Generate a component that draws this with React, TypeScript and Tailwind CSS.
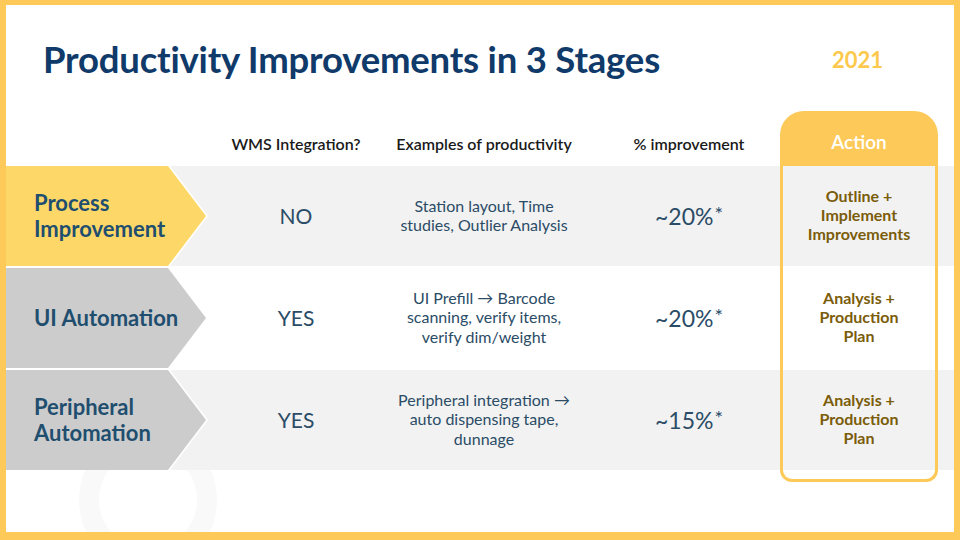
import React from "react";

type Row = {
  label: string[];
  active: boolean;
  wms: string;
  examples: string[];
  pct: string;
  action: string[];
  shade: boolean;
};

const rows: Row[] = [
  {
    label: ["Process", "Improvement"],
    active: true,
    wms: "NO",
    examples: ["Station layout, Time", "studies, Outlier Analysis"],
    pct: "~20%",
    action: ["Outline +", "Implement", "Improvements"],
    shade: true,
  },
  {
    label: ["UI Automation"],
    active: false,
    wms: "YES",
    examples: ["UI Prefill \u2192 Barcode", "scanning, verify items,", "verify dim/weight"],
    pct: "~20%",
    action: ["Analysis +", "Production", "Plan"],
    shade: false,
  },
  {
    label: ["Peripheral", "Automation"],
    active: false,
    wms: "YES",
    examples: ["Peripheral integration \u2192", "auto dispensing tape,", "dunnage"],
    pct: "~15%",
    action: ["Analysis +", "Production", "Plan"],
    shade: true,
  },
];

const Arrow = ({ row }: { row: Row }) => (
  <div className="w-[202px] h-[100px] shrink-0 bg-white [clip-path:polygon(0_0,164px_0,202px_50%,164px_100%,0_100%)]">
    <div
      className={`w-full h-full flex flex-col justify-center pl-[28px] [clip-path:polygon(0_0,162px_0,200px_50%,162px_100%,0_100%)] ${
        row.active ? "bg-[#fdd868]" : "bg-[#cccccc]"
      }`}
    >
      {row.label.map((l) => (
        <div key={l} className="text-[22px] leading-[26px] font-bold text-[#1f4e6f]">
          {l}
        </div>
      ))}
    </div>
  </div>
);

const StageRow = ({ row }: { row: Row }) => (
  <div className={`flex h-[100px] ${row.shade ? "bg-[#f2f2f2]" : "bg-white"}`}>
    <Arrow row={row} />
    <div className="w-[180px] shrink-0 -ml-[2px] flex items-center justify-center text-[21px] text-[#2b4c66]">
      {row.wms}
    </div>
    <div className="w-[196px] shrink-0 -mt-[2px] flex flex-col items-center justify-center text-[16px] leading-[19.5px] text-[#2b4c66]">
      {row.examples.map((e) => (
        <div key={e}>{e}</div>
      ))}
    </div>
    <div className="w-[198px] shrink-0 pl-[16px] flex items-center justify-center text-[23px] text-[#2b4c66]">
      {row.pct}
      <span className="text-[20px] -mt-[6px] ml-[1px]">*</span>
    </div>
    <div className="w-[158px] shrink-0 pb-[3px] border-x-[3px] border-[#fdc959] flex flex-col items-center justify-center text-[16px] leading-[19px] font-bold text-[#7a5c0a]">
      {row.action.map((a) => (
        <div key={a}>{a}</div>
      ))}
    </div>
    <div className="flex-1" />
  </div>
);

const Gap = () => (
  <div className="flex h-[2px] bg-white">
    <div className="w-[774px] shrink-0" />
    <div className="w-[158px] shrink-0 border-x-[3px] border-[#fdc959]" />
  </div>
);

export default function App() {
  return (
    <div
      className="relative w-[960px] h-[540px] bg-white border-t-[5px] border-l-[6px] border-r-[6px] border-b-[8px] border-[#fdc959] overflow-hidden flex flex-col"
      style={{ fontFamily: "Lato, 'Open Sans', sans-serif" }}
    >
      <svg className="absolute left-[72px] top-[425px]" width="150" height="150" viewBox="0 0 150 150">
        <circle cx="70" cy="70" r="59" fill="none" stroke="#f9f9f9" strokeWidth="20" />
      </svg>

      <div className="relative flex items-start justify-between pl-[37px] pr-[71px] pt-[32px] h-[106px]">
        <h1 className="text-[36.5px] leading-[44px] font-bold text-[#0f3a6a] tracking-[-0.2px]">
          Productivity Improvements in 3 Stages
        </h1>
        <div className="text-[22px] leading-[26px] font-bold text-[#fcc94c] mt-[10px]">2021</div>
      </div>

      <div className="relative flex flex-col">
        <div className="flex h-[55px] items-center">
          <div className="w-[200px] shrink-0" />
          <div className="w-[180px] shrink-0 pt-[10px] text-center text-[16px] font-semibold text-[#1a1a1a]">
            WMS Integration?
          </div>
          <div className="w-[196px] shrink-0 pt-[10px] text-center text-[16px] font-semibold text-[#1a1a1a]">
            Examples of productivity
          </div>
          <div className="w-[198px] shrink-0 pl-[16px] pt-[10px] text-center text-[16px] font-semibold text-[#1a1a1a]">
            % improvement
          </div>
          <div className="w-[158px] shrink-0 h-full pt-[8px] bg-[#fdc959] rounded-t-[24px] flex items-center justify-center text-[19px] font-semibold text-white">
            Action
          </div>
        </div>

        {rows.map((r, i) => (
          <React.Fragment key={i}>
            {i > 0 && <Gap />}
            <StageRow row={r} />
          </React.Fragment>
        ))}

        <div className="flex h-[12px]">
          <div className="w-[774px] shrink-0" />
          <div className="w-[158px] shrink-0 border-x-[3px] border-b-[3px] border-[#fdc959] rounded-b-[22px]" />
        </div>
      </div>
    </div>
  );
}
